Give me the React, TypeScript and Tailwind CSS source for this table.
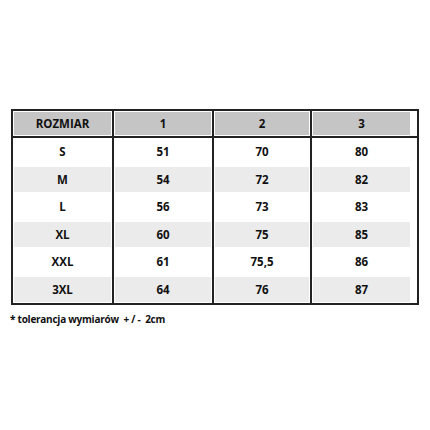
import React from "react";

const rows: string[][] = [
  ["S", "51", "70", "80"],
  ["M", "54", "72", "82"],
  ["L", "56", "73", "83"],
  ["XL", "60", "75", "85"],
  ["XXL", "61", "75,5", "86"],
  ["3XL", "64", "76", "87"],
];

const widths = ["w-[99px]", "w-[100px]", "w-[98px]", "w-[101px]"];

export default function App() {
  return (
    <div
      className="w-[430px] h-[430px] bg-white text-[#111] overflow-hidden"
      style={{ fontFamily: '"Open Sans", "Liberation Sans", sans-serif' }}
    >
      <div className="ml-[11px] mt-[109px] w-[408px] border-2 border-[#222]">
        <div className="flex h-[27px] border-b-2 border-[#222]">
          {["ROZMIAR", "1", "2", "3"].map((t, i) => (
            <div
              key={i}
              className={`${widths[i]} ${i > 0 ? "border-l-2 border-[#222]" : ""} p-px flex`}
            >
              <div className="flex-1 bg-[#c5c5c5] flex items-center justify-center text-[11.5px] font-bold">
                {t}
              </div>
            </div>
          ))}
        </div>
        {rows.map((r, ri) => (
          <div key={ri} className="flex h-[27.5px]">
            {r.map((t, i) => (
              <div
                key={i}
                className={`${widths[i]} ${i > 0 ? "border-l-2 border-[#222]" : ""} p-px flex`}
              >
                <div
                  className={`flex-1 ${ri % 2 === 1 ? "bg-[#ebebeb]" : "bg-white"} flex items-center justify-center text-[11.5px] font-bold`}
                >
                  {t}
                </div>
              </div>
            ))}
          </div>
        ))}
      </div>
      <div className="ml-[10px] mt-[9px] text-[10px] tracking-[-0.25px] font-bold leading-none">
        * tolerancja wymiarów&nbsp; + / -&nbsp; 2cm
      </div>
    </div>
  );
}
